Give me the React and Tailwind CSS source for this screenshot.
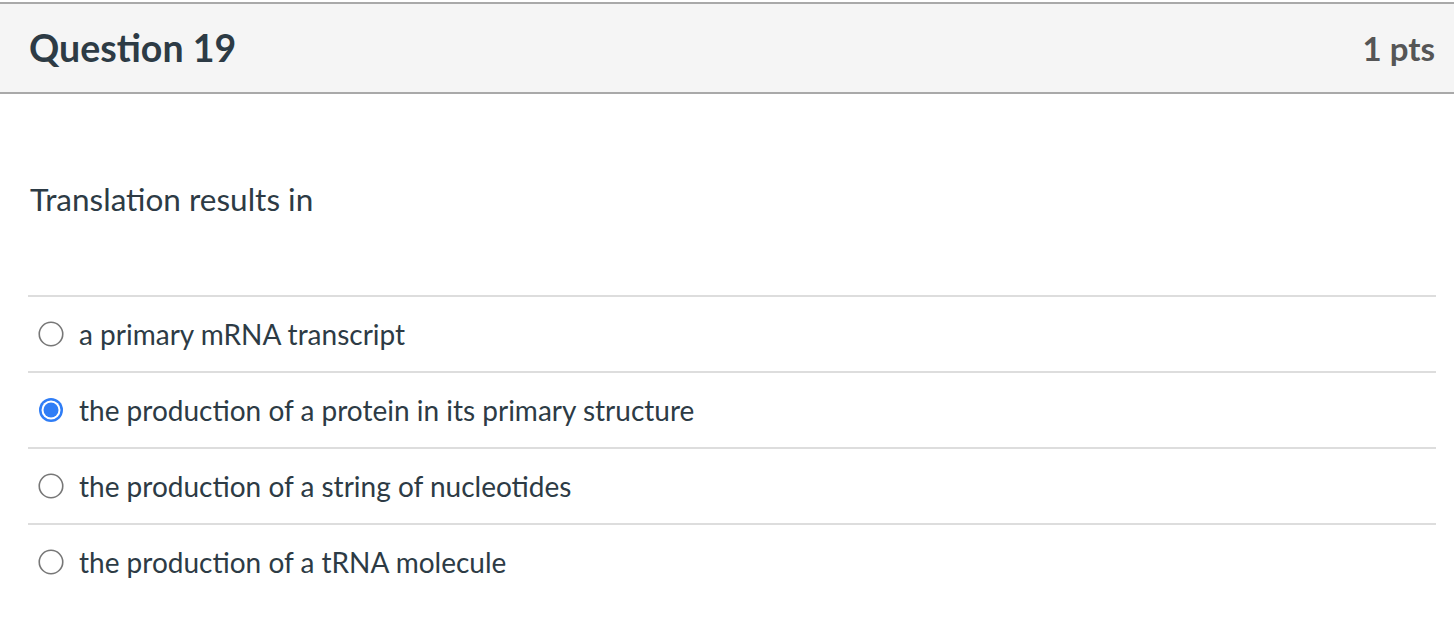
import React from 'react';

const options = [
  { id: 'a', label: 'a primary mRNA transcript', checked: false },
  { id: 'b', label: 'the production of a protein in its primary structure', checked: true },
  { id: 'c', label: 'the production of a string of nucleotides', checked: false },
  { id: 'd', label: 'the production of a tRNA molecule', checked: false },
];

const Radio = ({ checked }) => (
  <svg width="26" height="26" viewBox="0 0 26 26" className="shrink-0">
    {checked ? (
      <>
        <circle cx="13" cy="13" r="12" fill="#2f7df6" />
        <circle cx="13" cy="13" r="9.5" fill="#ffffff" />
        <circle cx="13" cy="13" r="7.5" fill="#2f7df6" />
      </>
    ) : (
      <circle cx="13" cy="13" r="11.75" fill="#ffffff" stroke="#777777" strokeWidth="1.6" />
    )}
  </svg>
);

const App = () => {
  return (
    <div className="w-[1454px] h-[632px] bg-white pt-[2px] font-['Lato','Noto_Sans',sans-serif] text-[#2d3b45]">
      {/* En-tête de la question */}
      <div className="h-[92px] bg-[#f5f5f5] border-y-2 border-[#a9a9a9] flex items-center justify-between pl-[29px] pr-[19px]">
        <h2 className="text-[37.5px] font-bold leading-none">Question 19</h2>
        <span className="text-[33px] font-bold leading-none text-[#565656]">1 pts</span>
      </div>

      <div className="pl-[28px] pr-[18px]">
        <p className="mt-[84px] text-[31.5px] leading-[42px] pl-[2px]">Translation results in</p>

        {/* Réponses */}
        <div className="mt-[75px]">
          {options.map((opt) => (
            <div
              key={opt.id}
              className="h-[76px] border-t-2 border-[#dddddd] flex items-center gap-[15px] pl-[10px]"
            >
              <Radio checked={opt.checked} />
              <span className="text-[28px] leading-none pb-[1px]">{opt.label}</span>
            </div>
          ))}
        </div>
      </div>
    </div>
  );
};

export default App;
